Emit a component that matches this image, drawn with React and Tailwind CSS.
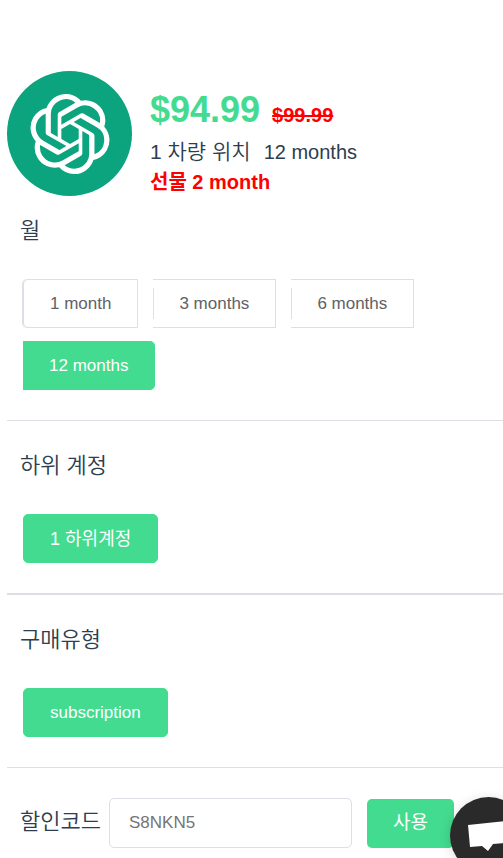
import { useState } from "react";
import { SiOpenai } from "react-icons/si";

const shapes = {
  first:
    "rounded-l-[5px] border border-[#dcdfe6] shadow-[-1px_0_0_0_#dcdfe6]",
  middle:
    "border-y border-r border-[#dcdfe6] before:absolute before:inset-y-2 before:left-0 before:w-px before:bg-[#dcdfe6]",
  last: "rounded-r-[5px] border-y border-r border-[#dcdfe6]",
  single: "rounded-[5px] border border-[#dcdfe6]",
};

function Option({ group, text, shape, size = "text-[17px]", checked, onSelect }) {
  return (
    <label
      className={`relative flex h-[49px] cursor-pointer items-center px-[26px] leading-6 text-[#606266] has-checked:border-[#43db8f] has-checked:bg-[#43db8f] has-checked:text-white ${size} ${shapes[shape]}`}
    >
      <input
        type="radio"
        name={group}
        checked={checked}
        onChange={onSelect}
        className="sr-only"
      />
      {text}
    </label>
  );
}

function Section({ title, divider, children }) {
  return (
    <fieldset className={`border-[#dcdfe6] pt-[30px] pb-[30px] ${divider}`}>
      <legend className="float-left mb-[33px] w-full pl-[13px] text-[22px] leading-[30px] font-[350]">
        {title}
      </legend>
      <div className="clear-both flex flex-wrap gap-x-[15px] gap-y-[13px] pl-4">
        {children}
      </div>
    </fieldset>
  );
}

const months = [
  { text: "1 month", shape: "first" },
  { text: "3 months", shape: "middle" },
  { text: "6 months", shape: "middle" },
  { text: "12 months", shape: "last" },
];

export default function App() {
  const [month, setMonth] = useState("12 months");
  const [code, setCode] = useState("");

  return (
    <main className="bg-white pt-[71px] pb-2.5 pl-[7px] font-['Liberation_Sans','Noto_Sans_CJK_KR',sans-serif] text-[#2c3e50]">
      <header className="flex h-[125px] gap-[18px]">
        <div className="flex size-[125px] shrink-0 items-center justify-center rounded-full bg-[#0ca37f]">
          <SiOpenai className="size-20 text-white" aria-hidden="true" />
        </div>
        <div className="pt-4 text-[20px] leading-[30px]">
          <p className="mb-1 flex items-baseline gap-3 font-bold">
            <span className="text-[36px] leading-[46px] text-[#43db8f]">$94.99</span>
            <del className="text-[#ff0000]">$99.99</del>
          </p>
          <p className="flex items-baseline gap-[13px] font-[350]">
            <span className="text-[21px]">1 차량 위치</span>
            <span>12 months</span>
          </p>
          <p className="font-bold text-[#ff0000]">선물 2 month</p>
        </div>
      </header>

      <form onSubmit={(e) => e.preventDefault()} className="-mt-2.5">
        <Section title="월" divider="border-b">
          {months.map((m) => (
            <Option
              key={m.text}
              group="month"
              text={m.text}
              shape={m.shape}
              checked={month === m.text}
              onSelect={() => setMonth(m.text)}
            />
          ))}
        </Section>
        <Section title="하위 계정" divider="border-b-2">
          <Option
            group="account"
            text="1 하위계정"
            shape="single"
            size="text-[18px]"
            checked
            onSelect={() => {}}
          />
        </Section>
        <Section title="구매유형" divider="border-b">
          <Option group="type" text="subscription" shape="single" checked onSelect={() => {}} />
        </Section>

        <div className="flex items-center pt-[30px] pr-[49px] pl-[13px]">
          <label htmlFor="code" className="mr-2 shrink-0 pb-0.5 text-[22px] leading-[30px] font-[350]">
            할인코드
          </label>
          <input
            id="code"
            type="text"
            value={code}
            onChange={(e) => setCode(e.target.value)}
            placeholder="S8NKN5"
            className="h-[50px] min-w-0 flex-1 rounded-[5px] border border-[#dcdfe6] px-[19px] text-[17px] placeholder:text-[#757575]"
          />
          <button
            type="submit"
            className="ml-[15px] h-[49px] shrink-0 rounded-[5px] bg-[#43db8f] px-[26px] text-[19px] leading-6 text-white"
          >
            사용
          </button>
        </div>
      </form>

      <button
        type="button"
        aria-label="Chat"
        className="fixed -right-6 -bottom-4 size-[77px] rounded-full bg-[#2a2a2a] shadow-[0_2px_12px_rgba(0,0,0,0.15)]"
      >
        <svg viewBox="0 0 77 77" className="size-full" fill="#fff" aria-hidden="true">
          <path d="M18 28 56 24l-1 22-12 1-5 7-6-5-12 1z" />
        </svg>
      </button>
    </main>
  );
}
